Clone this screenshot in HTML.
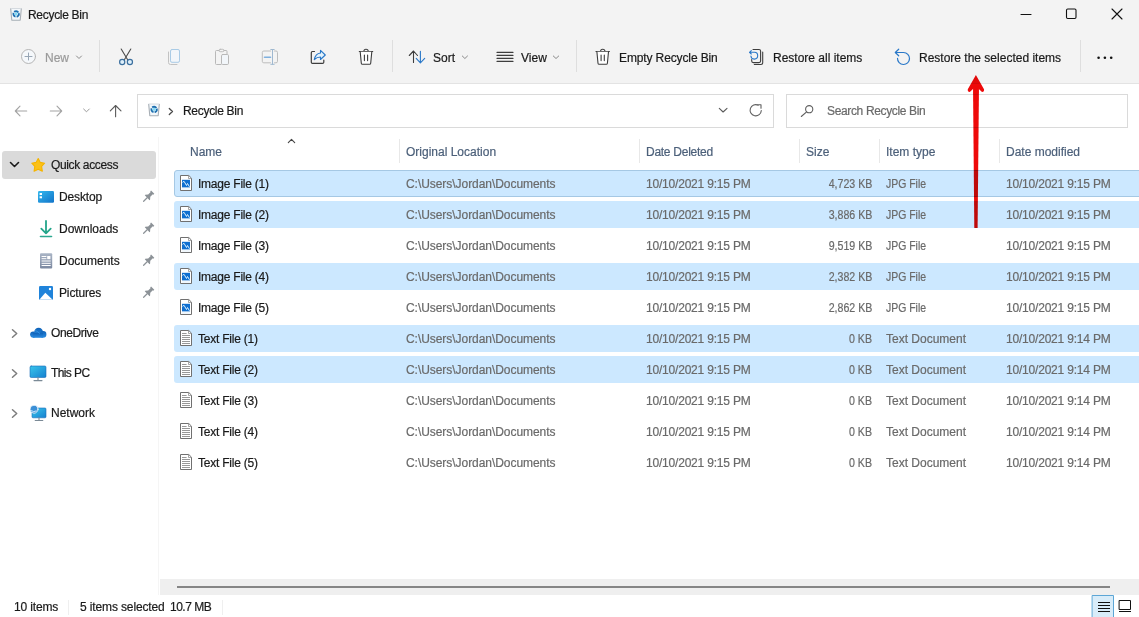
<!DOCTYPE html>
<html><head><meta charset="utf-8">
<style>
*{margin:0;padding:0;box-sizing:border-box}
html,body{width:1139px;height:617px;overflow:hidden;background:#fff}
body{position:relative;font-family:"Liberation Sans",sans-serif;font-size:12px;color:#1a1a1a}
.a{position:absolute}
.t{position:absolute;line-height:16px;white-space:nowrap;font-size:12px;-webkit-text-stroke:0.2px currentColor}
#top{left:0;top:0;width:1139px;height:84px;background:#f3f3f3;border-bottom:1px solid #e3e3e3}
.sep{position:absolute;width:1px;background:#dedede}
.box{position:absolute;border:1px solid #dadada;background:#fff}
.row{position:absolute;left:174px;width:968px;height:27px;background:#cce8ff;border-radius:3px}
.dt{letter-spacing:-0.2px}
.hd{color:#4c607a}
.g{color:#6a6a6a}
svg{position:absolute;overflow:visible}
</style></head><body>
<div id="top" class="a"></div>

<!-- title -->
<div class="t" style="left:28px;top:7px;letter-spacing:-0.3px">Recycle Bin</div>

<!-- toolbar labels -->
<div class="t" style="left:45px;top:50px;color:#9a9a9a">New</div>
<div class="t" style="left:433px;top:50px">Sort</div>
<div class="t" style="left:521px;top:50px">View</div>
<div class="t" style="left:619px;top:50px;letter-spacing:-0.12px">Empty Recycle Bin</div>
<div class="t" style="left:773px;top:50px">Restore all items</div>
<div class="t" style="left:919px;top:50px">Restore the selected items</div>

<div class="sep" style="left:99px;top:40px;height:32px"></div>
<div class="sep" style="left:392px;top:40px;height:32px"></div>
<div class="sep" style="left:576px;top:40px;height:32px"></div>
<div class="sep" style="left:1080px;top:40px;height:32px"></div>

<!-- address -->
<div class="box" style="left:137px;top:94px;width:637px;height:34px"></div>
<div class="box" style="left:786px;top:94px;width:342px;height:34px"></div>
<div class="t" style="left:183px;top:103px;letter-spacing:-0.3px">Recycle Bin</div>
<div class="t" style="left:827px;top:103px;color:#6a6a6a;letter-spacing:-0.35px">Search Recycle Bin</div>

<!-- sidebar -->
<div class="a" style="left:158px;top:137px;width:1px;height:458px;background:#f5f5f5"></div>
<div class="a" style="left:2px;top:151px;width:154px;height:28px;background:#dadada;border-radius:3px"></div>
<div class="t" style="left:51px;top:157px;letter-spacing:-0.36px">Quick access</div>
<div class="t" style="left:59px;top:189px;letter-spacing:-0.15px">Desktop</div>
<div class="t" style="left:59px;top:221px">Downloads</div>
<div class="t" style="left:59px;top:253px">Documents</div>
<div class="t" style="left:59px;top:285px;letter-spacing:-0.14px">Pictures</div>
<div class="t" style="left:51px;top:325px;letter-spacing:-0.4px">OneDrive</div>
<div class="t" style="left:51px;top:365px;letter-spacing:-0.6px">This PC</div>
<div class="t" style="left:51px;top:405px">Network</div>

<!-- header -->
<div class="t hd" style="left:190px;top:144px">Name</div>
<div class="t hd" style="left:406px;top:144px">Original Location</div>
<div class="t hd" style="left:646px;top:144px;letter-spacing:-0.27px">Date Deleted</div>
<div class="t hd" style="left:806px;top:144px">Size</div>
<div class="t hd" style="left:886px;top:144px">Item type</div>
<div class="t hd" style="left:1006px;top:144px">Date modified</div>
<div class="sep" style="left:399px;top:139px;height:24px;background:#e8e8e8"></div>
<div class="sep" style="left:639px;top:139px;height:24px;background:#e8e8e8"></div>
<div class="sep" style="left:799px;top:139px;height:24px;background:#e8e8e8"></div>
<div class="sep" style="left:879px;top:139px;height:24px;background:#e8e8e8"></div>
<div class="sep" style="left:999px;top:139px;height:24px;background:#e8e8e8"></div>

<!-- rows -->
<div id="rows">
<div class="row" style="top:170px;border:1px solid #a5c8e4"></div>
<div class="t" style="left:198px;top:176px;letter-spacing:-0.23px">Image File (1)</div>
<div class="t g" style="left:406px;top:176px;letter-spacing:-0.05px">C:\Users\Jordan\Documents</div>
<div class="t g dt" style="left:646px;top:176px">10/10/2021 9:15 PM</div>
<div class="t g" style="right:267px;top:176px;transform:scaleX(0.885);transform-origin:100% 50%">4,723 KB</div>
<div class="t g" style="left:886px;top:176px;transform:scaleX(0.87);transform-origin:0 50%">JPG File</div>
<div class="t g dt" style="left:1006px;top:176px">10/10/2021 9:15 PM</div>
<div class="row" style="top:201px"></div>
<div class="t" style="left:198px;top:207px;letter-spacing:-0.23px">Image File (2)</div>
<div class="t g" style="left:406px;top:207px;letter-spacing:-0.05px">C:\Users\Jordan\Documents</div>
<div class="t g dt" style="left:646px;top:207px">10/10/2021 9:15 PM</div>
<div class="t g" style="right:267px;top:207px;transform:scaleX(0.885);transform-origin:100% 50%">3,886 KB</div>
<div class="t g" style="left:886px;top:207px;transform:scaleX(0.87);transform-origin:0 50%">JPG File</div>
<div class="t g dt" style="left:1006px;top:207px">10/10/2021 9:15 PM</div>
<div class="t" style="left:198px;top:238px;letter-spacing:-0.23px">Image File (3)</div>
<div class="t g" style="left:406px;top:238px;letter-spacing:-0.05px">C:\Users\Jordan\Documents</div>
<div class="t g dt" style="left:646px;top:238px">10/10/2021 9:15 PM</div>
<div class="t g" style="right:267px;top:238px;transform:scaleX(0.885);transform-origin:100% 50%">9,519 KB</div>
<div class="t g" style="left:886px;top:238px;transform:scaleX(0.87);transform-origin:0 50%">JPG File</div>
<div class="t g dt" style="left:1006px;top:238px">10/10/2021 9:15 PM</div>
<div class="row" style="top:263px"></div>
<div class="t" style="left:198px;top:269px;letter-spacing:-0.23px">Image File (4)</div>
<div class="t g" style="left:406px;top:269px;letter-spacing:-0.05px">C:\Users\Jordan\Documents</div>
<div class="t g dt" style="left:646px;top:269px">10/10/2021 9:15 PM</div>
<div class="t g" style="right:267px;top:269px;transform:scaleX(0.885);transform-origin:100% 50%">2,382 KB</div>
<div class="t g" style="left:886px;top:269px;transform:scaleX(0.87);transform-origin:0 50%">JPG File</div>
<div class="t g dt" style="left:1006px;top:269px">10/10/2021 9:15 PM</div>
<div class="t" style="left:198px;top:300px;letter-spacing:-0.23px">Image File (5)</div>
<div class="t g" style="left:406px;top:300px;letter-spacing:-0.05px">C:\Users\Jordan\Documents</div>
<div class="t g dt" style="left:646px;top:300px">10/10/2021 9:15 PM</div>
<div class="t g" style="right:267px;top:300px;transform:scaleX(0.885);transform-origin:100% 50%">2,862 KB</div>
<div class="t g" style="left:886px;top:300px;transform:scaleX(0.87);transform-origin:0 50%">JPG File</div>
<div class="t g dt" style="left:1006px;top:300px">10/10/2021 9:15 PM</div>
<div class="row" style="top:325px"></div>
<div class="t" style="left:198px;top:331px;letter-spacing:-0.23px">Text File (1)</div>
<div class="t g" style="left:406px;top:331px;letter-spacing:-0.05px">C:\Users\Jordan\Documents</div>
<div class="t g dt" style="left:646px;top:331px">10/10/2021 9:15 PM</div>
<div class="t g" style="right:267px;top:331px;transform:scaleX(0.885);transform-origin:100% 50%">0 KB</div>
<div class="t g" style="left:886px;top:331px;">Text Document</div>
<div class="t g dt" style="left:1006px;top:331px">10/10/2021 9:14 PM</div>
<div class="row" style="top:356px"></div>
<div class="t" style="left:198px;top:362px;letter-spacing:-0.23px">Text File (2)</div>
<div class="t g" style="left:406px;top:362px;letter-spacing:-0.05px">C:\Users\Jordan\Documents</div>
<div class="t g dt" style="left:646px;top:362px">10/10/2021 9:15 PM</div>
<div class="t g" style="right:267px;top:362px;transform:scaleX(0.885);transform-origin:100% 50%">0 KB</div>
<div class="t g" style="left:886px;top:362px;">Text Document</div>
<div class="t g dt" style="left:1006px;top:362px">10/10/2021 9:14 PM</div>
<div class="t" style="left:198px;top:393px;letter-spacing:-0.23px">Text File (3)</div>
<div class="t g" style="left:406px;top:393px;letter-spacing:-0.05px">C:\Users\Jordan\Documents</div>
<div class="t g dt" style="left:646px;top:393px">10/10/2021 9:15 PM</div>
<div class="t g" style="right:267px;top:393px;transform:scaleX(0.885);transform-origin:100% 50%">0 KB</div>
<div class="t g" style="left:886px;top:393px;">Text Document</div>
<div class="t g dt" style="left:1006px;top:393px">10/10/2021 9:14 PM</div>
<div class="t" style="left:198px;top:424px;letter-spacing:-0.23px">Text File (4)</div>
<div class="t g" style="left:406px;top:424px;letter-spacing:-0.05px">C:\Users\Jordan\Documents</div>
<div class="t g dt" style="left:646px;top:424px">10/10/2021 9:15 PM</div>
<div class="t g" style="right:267px;top:424px;transform:scaleX(0.885);transform-origin:100% 50%">0 KB</div>
<div class="t g" style="left:886px;top:424px;">Text Document</div>
<div class="t g dt" style="left:1006px;top:424px">10/10/2021 9:14 PM</div>
<div class="t" style="left:198px;top:455px;letter-spacing:-0.23px">Text File (5)</div>
<div class="t g" style="left:406px;top:455px;letter-spacing:-0.05px">C:\Users\Jordan\Documents</div>
<div class="t g dt" style="left:646px;top:455px">10/10/2021 9:15 PM</div>
<div class="t g" style="right:267px;top:455px;transform:scaleX(0.885);transform-origin:100% 50%">0 KB</div>
<div class="t g" style="left:886px;top:455px;">Text Document</div>
<div class="t g dt" style="left:1006px;top:455px">10/10/2021 9:14 PM</div>
<svg id="fic" width="1139" height="617" style="left:0;top:0" fill="none">
<defs>
<g id="fimg">
 <path d="M180.5 175.5 H188.8 L191.5 178.2 V190.5 H180.5 Z" fill="#fff" stroke="#707070" stroke-width="1"/>
 <path d="M188.5 175.5 V178.5 H191.5" stroke="#909090" stroke-width="0.8"/>
 <rect x="182" y="179.8" width="8" height="7.6" fill="#0f6fd0"/>
 <path d="M182.5 182.3 L184 181.3 L186.5 185.5 L187.5 183.5 L189.5 186.8" stroke="#d9f0ff" stroke-width="1"/>
 <path d="M182 189 H189.8" stroke="#cfe4f7" stroke-width="0.6"/>
</g>
<g id="ftxt">
 <path d="M180.5 330.5 H188.8 L191.5 333.2 V345.5 H180.5 Z" fill="#fff" stroke="#707070" stroke-width="1"/>
 <path d="M188.5 330.5 V333.5 H191.5" stroke="#909090" stroke-width="0.8"/>
 <path d="M182 333.5 H186.6 M182 335.5 H190 M182 337.5 H190 M182 339.5 H190 M182 341.5 H190 M182 343.5 H190" stroke="#8c8c8c" stroke-width="0.9"/>
</g>
</defs>
<use href="#fimg" transform="translate(0 0)"/>
<use href="#fimg" transform="translate(0 31)"/>
<use href="#fimg" transform="translate(0 62)"/>
<use href="#fimg" transform="translate(0 93)"/>
<use href="#fimg" transform="translate(0 124)"/>
<use href="#ftxt" transform="translate(0 0)"/>
<use href="#ftxt" transform="translate(0 31)"/>
<use href="#ftxt" transform="translate(0 62)"/>
<use href="#ftxt" transform="translate(0 93)"/>
<use href="#ftxt" transform="translate(0 124)"/>
</svg>
</div><!--/rows-->

<!-- scrollbar -->
<div class="a" style="left:160px;top:579px;width:979px;height:16px;background:#efefef"></div>
<div class="a" style="left:177px;top:586px;width:933px;height:2px;background:#858585"></div>

<!-- status -->
<div class="a" style="left:68px;top:600px;width:1px;height:15px;background:#efefef"></div>
<div class="a" style="left:222px;top:600px;width:1px;height:15px;background:#efefef"></div>
<div class="t" style="left:14px;top:599px;letter-spacing:-0.14px">10 items</div>
<div class="t" style="left:80px;top:599px;letter-spacing:-0.13px">5 items selected</div>
<div class="t" style="left:170px;top:599px;letter-spacing:-0.5px">10.7 MB</div>
<svg id="ic" width="1139" height="617" viewBox="0 0 1139 617" style="left:0;top:0;pointer-events:none" fill="none" stroke-linecap="round" stroke-linejoin="round">
<defs>
 <linearGradient id="gbin" x1="0" y1="0" x2="0" y2="1"><stop offset="0" stop-color="#f4f8fb"/><stop offset="1" stop-color="#d8dde2"/></linearGradient>
 <linearGradient id="gdesk" x1="0" y1="0" x2="1" y2="1"><stop offset="0" stop-color="#35b9ee"/><stop offset="1" stop-color="#1173c9"/></linearGradient>
 <linearGradient id="gdoc" x1="0" y1="0" x2="0" y2="1"><stop offset="0" stop-color="#aab5c6"/><stop offset="1" stop-color="#7b88a0"/></linearGradient>
 <linearGradient id="gpc" x1="0" y1="0" x2="1" y2="1"><stop offset="0" stop-color="#3ac6ec"/><stop offset="1" stop-color="#1580cf"/></linearGradient>
 <linearGradient id="gcloud" x1="0" y1="0" x2="0" y2="1"><stop offset="0" stop-color="#0e62b8"/><stop offset="1" stop-color="#2a8be0"/></linearGradient>
</defs>
<!-- title recycle bin -->
<g id="rbin">
 <path d="M10.5 8.5 L21.5 8.5 L20.4 20.5 L11.6 20.5 Z" fill="#f3f7fa"/>
 <path d="M10.7 8.8 L11.8 20.3 H20.2 L21.3 8.8" stroke="#a7aeb5" stroke-width="1.1"/>
 <path d="M11.5 8.5 H20.5" stroke="#d5dadf" stroke-width="1"/>
 <circle cx="16.1" cy="14" r="2.7" stroke="#1c6fb0" stroke-width="1.8" stroke-dasharray="4.6 1.05" stroke-linecap="butt" transform="rotate(-20 16.1 14)"/>
 <circle cx="16.1" cy="14" r="1.4" fill="#7fdcf7"/>
</g>
<use href="#rbin" transform="translate(138 95.5)"/>
<!-- window controls -->
<path d="M1021 14.5 H1031" stroke="#111" stroke-width="1.1"/>
<rect x="1066.5" y="9" width="9.5" height="9.5" rx="1.2" stroke="#111" stroke-width="1.1"/>
<path d="M1112 9 L1122 19 M1122 9 L1112 19" stroke="#111" stroke-width="1.1"/>
<!-- New -->
<circle cx="28.5" cy="56.5" r="7" stroke="#b5b5b5" stroke-width="1" fill="#f5f8fb"/>
<path d="M28.5 53 V60 M25 56.5 H32" stroke="#98a6b5" stroke-width="1"/>
<path d="M76.5 56 L79 58.5 L81.5 56" stroke="#8a8a8a" stroke-width="1"/>
<!-- cut -->
<path d="M121.2 49 L127.8 60 M130.8 49 L124.2 60" stroke="#4a4a4a" stroke-width="1.1"/>
<circle cx="122.2" cy="62" r="2.6" stroke="#3b6f9e" stroke-width="1.2" fill="#dff0fb"/>
<circle cx="129.9" cy="62" r="2.6" stroke="#3b6f9e" stroke-width="1.2" fill="#dff0fb"/>
<!-- copy -->
<rect x="170.5" y="49.5" width="9" height="12.8" rx="1.5" stroke="#a9cbe6" stroke-width="1" fill="#f2f6fa"/>
<path d="M168.5 52 V62.5 Q168.5 64.5 170.5 64.5 H177" stroke="#c2c2c2" stroke-width="1"/>
<!-- paste -->
<path d="M219 50.5 H216.5 Q215.5 50.5 215.5 51.5 V63.5 Q215.5 64.5 216.5 64.5 H221 M224 50.5 H226 Q227 50.5 227 51.5 V54" stroke="#b8b8b8" stroke-width="1"/>
<rect x="219" y="49.3" width="5" height="2.4" rx="1.2" stroke="#b8b8b8" stroke-width="0.9"/>
<rect x="221.5" y="54.5" width="7" height="10" rx="1.2" stroke="#b8b8b8" stroke-width="1" fill="#f2f6fa"/>
<!-- rename -->
<path d="M270.5 51 H263.8 Q262.3 51 262.3 52.5 V61.3 Q262.3 62.8 263.8 62.8 H270.5 M274.5 51 H276 Q277.5 51 277.5 52.5 V61.3 Q277.5 62.8 276 62.8 H274.5" stroke="#bdbdbd" stroke-width="1"/>
<path d="M272.5 49.5 V64.3 M270.8 49.5 H274.2 M270.8 64.3 H274.2" stroke="#9fb8cf" stroke-width="1"/>
<path d="M264.5 57.2 H270.5" stroke="#7fb0de" stroke-width="1.6"/>
<!-- share -->
<path d="M314.5 51.5 H312.5 Q311.3 51.5 311.3 52.7 V62.2 Q311.3 63.4 312.5 63.4 H322.5 Q323.8 63.4 323.8 62.2 V60" stroke="#3d3d3d" stroke-width="1.2"/>
<path d="M320.5 50.3 L325.3 55 L320.5 59.5 V57 Q317 57 314.3 59.6 Q315.5 53.5 320.5 53 Z" stroke="#2a78c8" stroke-width="1.1" fill="#e3f3fd"/>
<!-- delete -->
<g id="trash" stroke="#3d3d3d" stroke-width="1.1">
 <path d="M359.3 51.5 H372.7"/>
 <path d="M363.9 51.3 Q363.9 49.3 366 49.3 Q368.2 49.3 368.2 51.3"/>
 <path d="M360.2 51.8 L361.3 63.2 Q361.4 64.3 362.5 64.3 H369.5 Q370.6 64.3 370.7 63.2 L371.8 51.8" fill="#fff"/>
 <path d="M364.4 55 V60.6 M367.6 55 V60.6"/>
</g>
<use href="#trash" transform="translate(236.7 0)"/>
<!-- sort -->
<path d="M413.5 51 V62.5 M409.3 55.5 L413.5 51 L417.5 55.5" stroke="#3d3d3d" stroke-width="1.1"/>
<path d="M420.4 51.2 V62.8 M416.2 58.3 L420.4 62.8 L424.7 58.3" stroke="#2a78c8" stroke-width="1.1"/>
<path d="M462.3 56 L464.9 58.5 L467.5 56" stroke="#8a8a8a" stroke-width="1"/>
<!-- view -->
<path d="M497 52.4 H513 M497 55.4 H513 M497 58.4 H513 M497 61.4 H513" stroke="#3d3d3d" stroke-width="1.1"/>
<path d="M553.3 56 L556 58.5 L558.7 56" stroke="#8a8a8a" stroke-width="1"/>
<!-- restore all -->
<path d="M753 49.5 H759 Q760.6 49.5 760.6 51.1 V61 Q760.6 62.6 759 62.6 H753.3 Q751.7 62.6 751.7 61 V59.5" stroke="#3d3d3d" stroke-width="1.1"/>
<path d="M762.7 52 V62.8 Q762.7 64.5 761 64.5 H754.3" stroke="#3d3d3d" stroke-width="1.1"/>
<path d="M749.5 52.3 H754.5 A3.4 3.4 0 1 1 750.9 56 M751.3 50.6 L749.5 52.3 L751.3 54" stroke="#2a78c8" stroke-width="1.1"/>
<!-- restore selected -->
<path d="M895.3 52.5 H903.6 A6 6 0 1 1 897.5 58.3 M898.7 49.2 L895.3 52.5 L898.7 55.8" stroke="#2a78c8" stroke-width="1.2"/>
<!-- more -->
<circle cx="1098.6" cy="57.7" r="1.3" fill="#111"/>
<circle cx="1104.9" cy="57.7" r="1.3" fill="#111"/>
<circle cx="1111.2" cy="57.7" r="1.3" fill="#111"/>
<!-- nav -->
<path d="M15.3 111 H26.7 M20 106.2 L15.3 111 L20 115.8" stroke="#a3a3a3" stroke-width="1.1"/>
<path d="M50.3 111 H61.7 M57 106.2 L61.7 111 L57 115.8" stroke="#a3a3a3" stroke-width="1.1"/>
<path d="M83.6 109 L86.5 111.8 L89.3 109" stroke="#9a9a9a" stroke-width="1"/>
<path d="M115.6 105.5 V116.8 M110.3 110.8 L115.6 105.5 L121 110.8" stroke="#5a5a5a" stroke-width="1.1"/>
<!-- address -->
<path d="M169.3 108.5 L172.5 111.5 L169.3 114.5" stroke="#4a4a4a" stroke-width="1.3"/>
<path d="M719.3 108.3 L723.1 112 L727 108.3" stroke="#5a5a5a" stroke-width="1.1"/>
<path d="M761.3 110.5 A5.6 5.6 0 1 1 758.3 105.3 M757.4 104.7 H761 V108.2" stroke="#5f5f5f" stroke-width="1.1"/>
<circle cx="809.2" cy="109.2" r="3.6" stroke="#5f5f5f" stroke-width="1.1"/>
<path d="M806.6 111.8 L801.3 116.5" stroke="#5f5f5f" stroke-width="1.1"/>
<!-- sidebar -->
<path d="M10.5 162.5 L14.5 166.5 L18.5 162.5" stroke="#1a1a1a" stroke-width="1.6"/>
<path d="M38.2 158.6 L40.3 162.4 L44.6 163.2 L41.6 166.4 L42.3 171.2 L38.2 169.2 L34.1 171.2 L34.8 166.4 L31.8 163.2 L36.1 162.4 Z" fill="#fbc118" stroke="#f5b400" stroke-width="1.1"/>
<rect x="38" y="191" width="16" height="11.8" rx="1.2" fill="url(#gdesk)"/>
<rect x="39.6" y="193" width="2.4" height="2" fill="#fff"/>
<rect x="39.6" y="196.3" width="2.4" height="2" fill="#fff"/>
<path d="M46 221 V233.3 M41.3 228.7 L46 233.3 L50.7 228.7" stroke="#23a58a" stroke-width="1.8"/>
<path d="M40.5 236.5 H51.5" stroke="#2aa88f" stroke-width="1.6"/>
<rect x="40" y="253.2" width="12.2" height="15.4" rx="1" fill="url(#gdoc)"/>
<path d="M42 256.5 H46 M42 258.7 H46 M42 261 H50.3 M42 263.3 H50.3 M42 265.5 H50.3" stroke="#fff" stroke-width="1"/>
<rect x="47.2" y="256" width="3.2" height="3.2" fill="#fff"/>
<rect x="39" y="286" width="14" height="14" rx="1.2" fill="#1f83da"/>
<path d="M39.3 299.7 L45.3 292.8 L52.7 299.7 Z" fill="#fff"/>
<circle cx="50" cy="289" r="1.2" fill="#fff"/>
<g id="pin" transform="translate(148.3 196.6) rotate(45)">
 <path d="M-2.3 -6.2 H2.3 V-4.9 H1.5 V-1.3 L3.4 0.9 V1.6 H-3.4 V0.9 L-1.5 -1.3 V-4.9 H-2.3 Z" fill="#8c9297"/>
 <path d="M0 1.6 V6.6" stroke="#8c9297" stroke-width="1.2"/>
</g>
<use href="#pin" transform="translate(0 32)"/>
<use href="#pin" transform="translate(0 64)"/>
<use href="#pin" transform="translate(0 96)"/>
<path d="M12.5 329.8 L16.7 333.5 L12.5 337.2" stroke="#7c7c7c" stroke-width="1.5"/>
<path d="M12.5 369.8 L16.7 373.5 L12.5 377.2" stroke="#7c7c7c" stroke-width="1.5"/>
<path d="M12.5 409.8 L16.7 413.5 L12.5 417.2" stroke="#7c7c7c" stroke-width="1.5"/>
<g fill="url(#gcloud)"><circle cx="33.2" cy="334.6" r="3.1"/><circle cx="38.6" cy="332.1" r="4.4"/><circle cx="43.1" cy="334.4" r="3.3"/><rect x="33" y="333" width="10" height="4.8"/></g><path d="M35.5 330.5 Q38 331 39.5 333.5" stroke="#3a9ae6" stroke-width="0.7"/>
<rect x="30" y="366" width="16" height="11.5" rx="1.2" fill="url(#gpc)" stroke="#1a6db8" stroke-width="0.6"/>
<path d="M38 377.5 V380.3 M34 380.6 H42" stroke="#7b8a96" stroke-width="1.1"/>
<rect x="32" y="408" width="14" height="9.8" rx="1" fill="url(#gpc)" stroke="#1a6db8" stroke-width="0.6"/>
<path d="M39 417.8 V420 M35.2 420.5 H42.8" stroke="#7b8a96" stroke-width="1.1"/>
<circle cx="34" cy="409.2" r="4" fill="#3b8fd6" stroke="#fff" stroke-width="0.8"/>
<path d="M31.5 410.8 Q33.5 412.5 36.3 411" stroke="#cfe9fb" stroke-width="1"/>
<!-- header caret -->
<path d="M288.3 142.6 L291.5 139.3 L294.7 142.6" stroke="#444" stroke-width="1.1"/>
<!-- status view buttons -->
<rect x="1092.5" y="595.5" width="21" height="24" fill="#d8ecf9" stroke="#5ca6d6" stroke-width="1"/>
<path d="M1098 602.5 H1110 M1098 605.5 H1110 M1098 608.5 H1110 M1098 611.5 H1110" stroke="#111" stroke-width="1" stroke-linecap="butt"/>
<rect x="1119.5" y="600.5" width="11" height="9" stroke="#111" stroke-width="1"/>
<path d="M1119 611.5 H1131" stroke="#111" stroke-width="1" stroke-linecap="butt"/>
</svg>
<svg id="arrow" width="1139" height="617" style="left:0;top:0;mix-blend-mode:multiply">
<path d="M973 84 L974.3 228 L977.6 228 L979 84 Z" fill="#ee0a0a"/>
<path d="M975.9 75 L967.8 89.3 Q967.3 91.8 969.8 91.9 L973.5 88.5 H978.3 L982 91.9 Q984.5 91.8 984 89.3 Z" fill="#ee0a0a"/>
</svg>
</body></html>
